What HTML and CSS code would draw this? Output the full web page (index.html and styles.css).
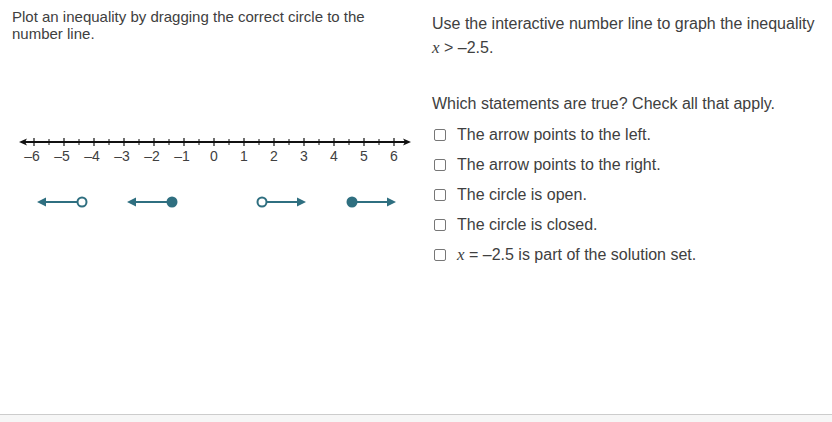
FILE: index.html
```html
<!DOCTYPE html>
<html>
<head>
<meta charset="utf-8">
<link rel="stylesheet" href="styles.css">
</head>
<body>
<div class="page">
  <div class="left">
    <p class="prompt">Plot an inequality by dragging the correct circle to the number line.</p>
    <svg class="nl" width="420" height="90" viewBox="0 0 420 90">
      <g stroke="#111" stroke-width="2">
        <line x1="24" y1="12" x2="406" y2="12"/>
      </g>
      <polygon points="19,12 27,8.5 25,12 27,15.5" fill="#111"/>
      <polygon points="411,12 403,8.5 405,12 403,15.5" fill="#111"/>
      <g stroke="#111" stroke-width="1.2">
        <line x1="34" y1="8" x2="34" y2="16"/><line x1="64" y1="8" x2="64" y2="16"/><line x1="94" y1="8" x2="94" y2="16"/><line x1="124" y1="8" x2="124" y2="16"/><line x1="154" y1="8" x2="154" y2="16"/><line x1="184" y1="8" x2="184" y2="16"/><line x1="214" y1="8" x2="214" y2="16"/><line x1="244" y1="8" x2="244" y2="16"/><line x1="274" y1="8" x2="274" y2="16"/><line x1="304" y1="8" x2="304" y2="16"/><line x1="334" y1="8" x2="334" y2="16"/><line x1="364" y1="8" x2="364" y2="16"/><line x1="394" y1="8" x2="394" y2="16"/>
      </g>
      <g stroke="#111" stroke-width="1">
        <line x1="49" y1="9" x2="49" y2="15"/><line x1="79" y1="9" x2="79" y2="15"/><line x1="109" y1="9" x2="109" y2="15"/><line x1="139" y1="9" x2="139" y2="15"/><line x1="169" y1="9" x2="169" y2="15"/><line x1="199" y1="9" x2="199" y2="15"/><line x1="229" y1="9" x2="229" y2="15"/><line x1="259" y1="9" x2="259" y2="15"/><line x1="289" y1="9" x2="289" y2="15"/><line x1="319" y1="9" x2="319" y2="15"/><line x1="349" y1="9" x2="349" y2="15"/><line x1="379" y1="9" x2="379" y2="15"/>
      </g>
      <g class="lbl" text-anchor="middle">
        <text x="32" y="31">–6</text><text x="62" y="31">–5</text><text x="92" y="31">–4</text><text x="122" y="31">–3</text><text x="152" y="31">–2</text><text x="182" y="31">–1</text><text x="214" y="31">0</text><text x="244" y="31">1</text><text x="274" y="31">2</text><text x="304" y="31">3</text><text x="334" y="31">4</text><text x="364" y="31">5</text><text x="394" y="31">6</text>
      </g>
      <g stroke="#2f6f80" stroke-width="2" fill="#2f6f80">
        <line x1="44" y1="72" x2="77" y2="72"/>
        <polygon points="37,72 46,67.5 46,76.5" stroke="none"/>
        <circle cx="82" cy="72" r="4.5" fill="#fff"/>
        <line x1="134" y1="72" x2="168" y2="72"/>
        <polygon points="127,72 136,67.5 136,76.5" stroke="none"/>
        <circle cx="172" cy="72" r="5.5" stroke="none"/>
        <line x1="267" y1="72" x2="299" y2="72"/>
        <polygon points="306,72 297,67.5 297,76.5" stroke="none"/>
        <circle cx="262" cy="72" r="4.5" fill="#fff"/>
        <line x1="356" y1="72" x2="389" y2="72"/>
        <polygon points="396,72 387,67.5 387,76.5" stroke="none"/>
        <circle cx="352" cy="72" r="5.5" stroke="none"/>
      </g>
    </svg>
  </div>
  <div class="right">
    <p class="q">Use the interactive number line to graph the inequality<br><span class="var">x</span> &gt; –2.5.</p>
    <p class="ask">Which statements are true? Check all that apply.</p>
    <ul class="opts">
      <li><span class="box"></span>The arrow points to the left.</li>
      <li><span class="box"></span>The arrow points to the right.</li>
      <li><span class="box"></span>The circle is open.</li>
      <li><span class="box"></span>The circle is closed.</li>
      <li><span class="box"></span><span class="var">x</span>&nbsp;= –2.5 is part of the solution set.</li>
    </ul>
  </div>
</div>
<div class="footer"></div>
</body>
</html>
```

FILE: styles.css
```css
html, body {
  margin: 0;
  padding: 0;
  background: #fff;
}
body {
  width: 832px;
  height: 422px;
  overflow: hidden;
  font-family: "Liberation Sans", Arial, sans-serif;
  color: #404040;
  display: flex;
  flex-direction: column;
}
.page {
  flex: 1;
  display: flex;
}
.left {
  width: 420px;
  padding-left: 12px;
  box-sizing: border-box;
}
.prompt {
  margin: 8px 0 0;
  font-size: 15px;
  line-height: 17px;
  width: 380px;
}
.nl {
  display: block;
  margin: 88px 0 0 -12px;
}
.lbl text {
  font-family: "Liberation Sans", Arial, sans-serif;
  font-size: 14px;
  fill: #404040;
}
.right {
  padding-left: 12px;
  flex: 1;
}
.q {
  margin: 12px 0 0;
  font-size: 16px;
  line-height: 24px;
}
.var {
  font-family: "Liberation Serif", "Times New Roman", serif;
  font-style: italic;
  font-size: 17px;
}
.ask {
  margin: 32px 0 0;
  font-size: 16px;
  line-height: 24px;
}
.opts {
  list-style: none;
  margin: 4px 0 0;
  padding: 0;
}
.opts li {
  display: flex;
  align-items: center;
  height: 30px;
  font-size: 16px;
}
.box {
  width: 10px;
  height: 10px;
  border: 1px solid #777;
  border-radius: 2px;
  margin: 0 11px 0 2px;
  background: #fff;
}
.footer {
  height: 7px;
  border-top: 1px solid #ccc;
  background: #f6f6f6;
}
```
